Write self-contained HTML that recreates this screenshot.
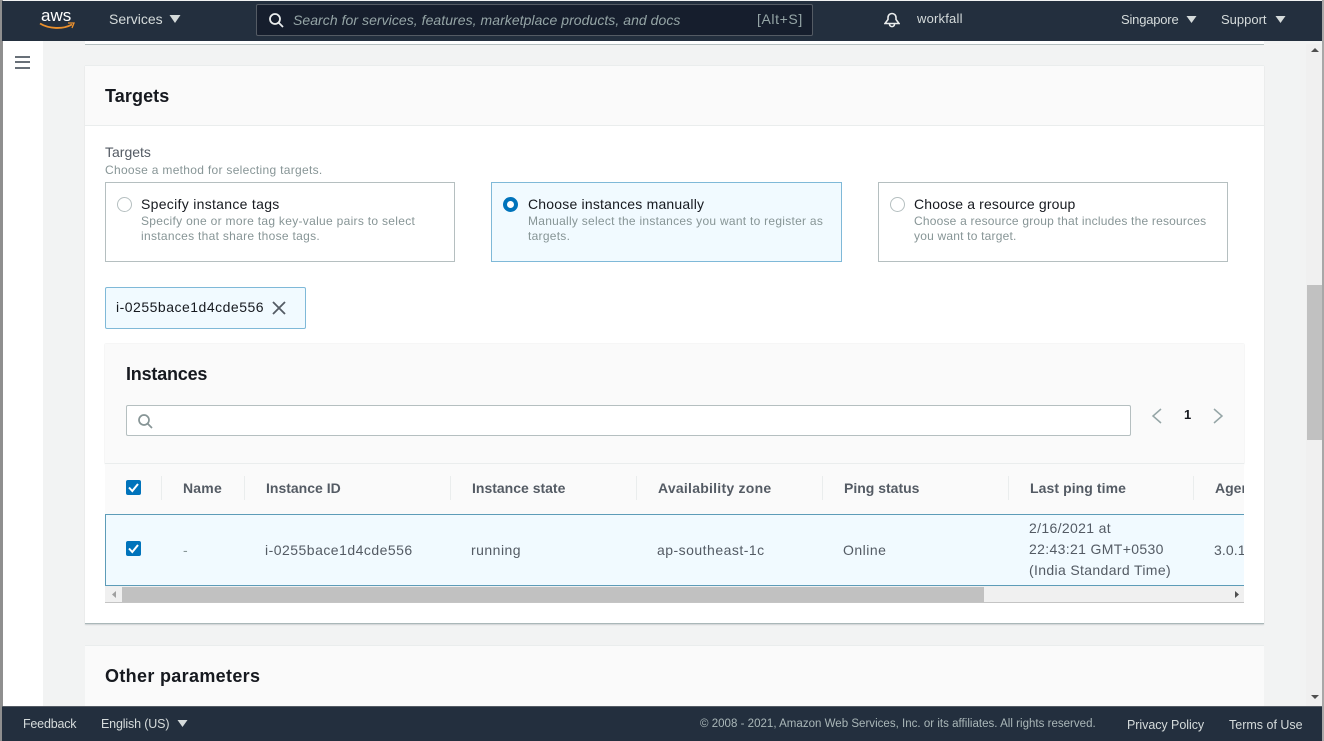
<!DOCTYPE html>
<html><head><meta charset="utf-8"><style>
html,body{margin:0;padding:0}
body{width:1324px;height:741px;position:relative;overflow:hidden;background:#fff;font-family:"Liberation Sans",sans-serif;color:#16191f}
#w{left:0;top:0;width:1324px;height:741px;overflow:hidden;filter:blur(.3px)}
div,span.t,svg{position:absolute}
.t{white-space:nowrap;line-height:16px}
.d{color:#879596;font-size:12px;letter-spacing:.3px}
.o{color:#16191f;font-size:14px;letter-spacing:.2px}
.th{font-weight:bold;font-size:14px;color:#545b64}
.td{font-size:14px;color:#545b64;letter-spacing:.48px}
.sep{width:1px;height:24px;top:476px;background:#eaeded}
.card{background:#fff;left:85px;width:1179px;box-shadow:0 1px 1px rgba(0,28,36,.15)}
.opt{top:182px;height:78px;width:348px;border:1px solid #b5bfc0;background:#fff}
</style></head><body><div id="w">
<div style="left:0;top:0;width:1324px;height:741px;background:#f2f3f3"></div>
<div style="left:3px;top:41px;width:40px;height:666px;background:#fff"></div>
<div style="left:0;top:0;width:3px;height:741px;background:#8f8f8f"></div>
<div style="left:1322px;top:0;width:2px;height:741px;background:#a8a8a8"></div>
<!-- scrollbar -->
<div style="left:1306px;top:44px;width:16px;height:662px;background:#f0f0f0"></div>
<div style="left:1307px;top:285px;width:15px;height:155px;background:#c1c1c1"></div>
<svg style="left:1310px;top:47px" width="10" height="8"><path d="M5 1L9 5H1z" fill="#505050"/></svg>
<svg style="left:1310px;top:693px" width="10" height="8"><path d="M1 2H9L5 6z" fill="#505050"/></svg>
<!-- top remnant -->
<div style="left:85px;top:41px;width:1179px;height:4px;background:#fff;border-bottom:1px solid #b5bfc0;box-sizing:border-box"></div>
<!-- hamburger -->
<div style="left:15px;top:56px;width:15px;height:2px;background:#687078"></div>
<div style="left:15px;top:61px;width:15px;height:2px;background:#687078"></div>
<div style="left:15px;top:67px;width:15px;height:2px;background:#687078"></div>
<!-- card 1 -->
<div class="card" style="top:65px;height:559px;border-bottom:1px solid #aab7b8;box-sizing:border-box"></div>
<div style="left:85px;top:65px;width:1179px;height:61px;background:#fafafa;border-bottom:1px solid #eaeded;border-top:1px solid #eaeded;box-sizing:border-box"></div>
<span class="t" style="left:105px;top:87px;font-size:18px;line-height:18px;font-weight:bold;letter-spacing:.1px">Targets</span>
<span class="t" style="left:105px;top:144px;font-size:14px;color:#545b64">Targets</span>
<span class="t d" style="left:105px;top:162px">Choose a method for selecting targets.</span>
<!-- options -->
<div class="opt" style="left:105px"></div>
<div class="opt" style="left:491px;background:#f1faff;border-color:#7fb9d8;width:349px"></div>
<div class="opt" style="left:878px"></div>
<div style="left:117px;top:197px;width:13px;height:13px;border:1px solid #b5bfc0;border-radius:50%"></div>
<div style="left:503px;top:197px;width:7px;height:7px;border:4px solid #0073bb;border-radius:50%;background:#fff"></div>
<div style="left:890px;top:197px;width:13px;height:13px;border:1px solid #b5bfc0;border-radius:50%"></div>
<span class="t o" style="left:141px;top:196px;letter-spacing:.3px">Specify instance tags</span>
<span class="t d" style="left:141px;top:214px;line-height:15px">Specify one or more tag key-value pairs to select<br>instances that share those tags.</span>
<span class="t o" style="left:528px;top:196px">Choose instances manually</span>
<span class="t d" style="left:528px;top:214px;line-height:15px;letter-spacing:.27px">Manually select the instances you want to register as<br>targets.</span>
<span class="t o" style="left:914px;top:196px;letter-spacing:.15px">Choose a resource group</span>
<span class="t d" style="left:914px;top:214px;line-height:15px;letter-spacing:.2px">Choose a resource group that includes the resources<br>you want to target.</span>
<!-- token -->
<div style="left:105px;top:287px;width:199px;height:40px;background:#f1faff;border:1px solid #7fb9d8;border-radius:2px"></div>
<span class="t" style="left:116px;top:299px;font-size:14px;color:#16191f;letter-spacing:.5px">i-0255bace1d4cde556</span>
<svg style="left:271px;top:300px" width="16" height="16"><path d="M2 2L14 14M14 2L2 14" stroke="#545b64" stroke-width="1.8" fill="none"/></svg>
<!-- instances container -->
<div style="left:105px;top:344px;width:1139px;height:120px;background:#fafafa;box-shadow:0 0 1px rgba(0,28,36,.2)"></div>
<span class="t" style="left:126px;top:365px;font-size:18px;line-height:18px;font-weight:bold;letter-spacing:-.2px">Instances</span>
<div style="left:126px;top:405px;width:1003px;height:29px;background:#fff;border:1px solid #b5bfc0;border-radius:2px"></div>
<svg style="left:137px;top:413px" width="16" height="16" fill="none" stroke="#879596" stroke-width="1.7"><circle cx="7" cy="7" r="5"/><path d="M10.500 10.500L15 15"/></svg>
<svg style="left:1150px;top:407px" width="14" height="18" fill="none" stroke="#95a5a6" stroke-width="1.5"><path d="M11 2L3 9L11 16"/></svg>
<span class="t" style="left:1184px;top:407px;font-size:13px;font-weight:bold">1</span>
<svg style="left:1211px;top:407px" width="14" height="18" fill="none" stroke="#95a5a6" stroke-width="1.5"><path d="M3 2L11 9L3 16"/></svg>
<!-- table head -->
<div style="left:105px;top:463px;width:1139px;height:51px;background:#fafafa;border-top:1px solid #eaeded;box-sizing:border-box"></div>
<div style="left:126px;top:480px;width:15px;height:15px;background:#0073bb;border-radius:2px"></div>
<svg style="left:126px;top:480px" width="15" height="15" fill="none" stroke="#fff" stroke-width="2"><path d="M3 7.500L6.300 11L12 4"/></svg>
<div class="sep" style="left:161px"></div><div class="sep" style="left:244px"></div><div class="sep" style="left:450px"></div><div class="sep" style="left:636px"></div><div class="sep" style="left:822px"></div><div class="sep" style="left:1008px"></div><div class="sep" style="left:1193px"></div>
<span class="t th" style="left:183px;top:480px;letter-spacing:.2px">Name</span>
<span class="t th" style="left:266px;top:480px">Instance ID</span>
<span class="t th" style="left:472px;top:480px">Instance state</span>
<span class="t th" style="left:658px;top:480px;letter-spacing:.25px">Availability zone</span>
<span class="t th" style="left:844px;top:480px">Ping status</span>
<span class="t th" style="left:1030px;top:480px;letter-spacing:.08px">Last ping time</span>
<div style="left:1215px;top:480px;width:29px;height:16px;overflow:hidden"><span class="t th" style="left:0;top:0">Agent</span></div>
<!-- row -->
<div style="left:105px;top:514px;width:1139px;height:72px;background:#f1faff;border:1px solid #5d9cb8;border-right:none;box-sizing:border-box"></div>
<div style="left:126px;top:541px;width:15px;height:15px;background:#0073bb;border-radius:2px"></div>
<svg style="left:126px;top:541px" width="15" height="15" fill="none" stroke="#fff" stroke-width="2"><path d="M3 7.500L6.300 11L12 4"/></svg>
<span class="t td" style="left:183px;top:542px;color:#879596">-</span>
<span class="t td" style="left:265px;top:542px">i-0255bace1d4cde556</span>
<span class="t td" style="left:471px;top:542px">running</span>
<span class="t td" style="left:657px;top:542px">ap-southeast-1c</span>
<span class="t td" style="left:843px;top:542px">Online</span>
<span class="t td" style="left:1029px;top:518px;line-height:21px;letter-spacing:.35px">2/16/2021 at<br>22:43:21 GMT+0530<br>(India Standard Time)</span>
<div style="left:1214px;top:542px;width:30px;height:16px;overflow:hidden"><span class="t td" style="left:0;top:0;letter-spacing:.1px">3.0.161</span></div>
<!-- table hscroll -->
<div style="left:105px;top:586px;width:1139px;height:17px;background:#f0f0f0;border-bottom:1px solid #c4c4c4;box-sizing:border-box"></div>
<div style="left:122px;top:587px;width:862px;height:15px;background:#c1c1c1"></div>
<svg style="left:110px;top:590px" width="8" height="9"><path d="M6 1V8L2 4.500z" fill="#a0a0a0"/></svg>
<svg style="left:1233px;top:590px" width="8" height="9"><path d="M2 1V8L6 4.500z" fill="#505050"/></svg>
<!-- card 2 -->
<div style="left:85px;top:645px;width:1179px;height:61px;background:#fafafa;border-top:1px solid #eaeded;box-sizing:border-box"></div>
<span class="t" style="left:105px;top:667px;font-size:18px;line-height:18px;font-weight:bold;letter-spacing:.33px">Other parameters</span>
<!-- header -->
<div style="left:2px;top:1px;width:1320px;height:40px;background:#232f3e"></div>
<span class="t" style="left:41px;top:7px;font-size:17px;color:#fff;line-height:18px">aws</span>
<svg style="left:39px;top:21px" width="36" height="10" fill="none"><path d="M1 2.500C10 8 24 8.500 33 3.500" stroke="#ec912d" stroke-width="1.800"/><path d="M29 2L35 2L33 7" stroke="#ec912d" stroke-width="1.300"/></svg>
<span class="t" style="left:109px;top:11px;font-size:14px;color:#d5dbdb">Services</span>
<svg style="left:169px;top:14px" width="12" height="10"><path d="M0.500 1H11.500L6 9z" fill="#d5dbdb"/></svg>
<div style="left:256px;top:4px;width:555px;height:30px;background:#161e2d;border:1px solid #545b64;border-radius:2px"></div>
<svg style="left:268px;top:12px" width="16" height="16" fill="none" stroke="#eaeded" stroke-width="1.800"><circle cx="7" cy="7" r="5"/><path d="M10.500 10.500L15 15"/></svg>
<span class="t" style="left:293px;top:12px;font-size:14px;font-style:italic;color:#95a5a6;letter-spacing:.05px">Search for services, features, marketplace products, and docs</span>
<span class="t" style="left:757px;top:11px;font-size:14px;color:#95a5a6;letter-spacing:.6px">[Alt+S]</span>
<svg style="left:884px;top:12px" width="16" height="17" fill="none" stroke="#eaeded" stroke-width="1.600"><path d="M1 11.500H15L12 7.500V5.500C12 3 10 1.500 8 1.500S4 3 4 5.500V7.500L1 11.500Z"/><path d="M5.500 12C5.500 15.500 10.500 15.500 10.500 12"/></svg>
<span class="t" style="left:917px;top:11px;font-size:13px;color:#d5dbdb;letter-spacing:.2px">workfall</span>
<span class="t" style="left:1121px;top:12px;font-size:13px;color:#d5dbdb;letter-spacing:-.2px">Singapore</span>
<svg style="left:1186px;top:15px" width="11" height="9"><path d="M0.500 1H10.500L5.500 8z" fill="#d5dbdb"/></svg>
<span class="t" style="left:1221px;top:12px;font-size:13px;color:#d5dbdb">Support</span>
<svg style="left:1275px;top:15px" width="11" height="9"><path d="M0.500 1H10.500L5.500 8z" fill="#d5dbdb"/></svg>
<!-- footer -->
<div style="left:2px;top:706px;width:1320px;height:35px;background:#232f3e;border-top:1px solid #545b64;box-sizing:border-box"></div>
<span class="t" style="left:23px;top:716px;font-size:12.500px;color:#d5dbdb;letter-spacing:-.2px">Feedback</span>
<span class="t" style="left:101px;top:716px;font-size:12.500px;color:#d5dbdb;letter-spacing:-.15px">English (US)</span>
<svg style="left:177px;top:719px" width="11" height="9"><path d="M0.500 1H10.500L5.500 8z" fill="#d5dbdb"/></svg>
<span class="t" style="left:700px;top:716px;font-size:11.500px;color:#aab7b8;letter-spacing:.02px">© 2008 - 2021, Amazon Web Services, Inc. or its affiliates. All rights reserved.</span>
<span class="t" style="left:1127px;top:717px;font-size:12.500px;color:#d5dbdb;letter-spacing:-.05px">Privacy Policy</span>
<span class="t" style="left:1229px;top:717px;font-size:12.500px;color:#d5dbdb">Terms of Use</span>
</div></body></html>
